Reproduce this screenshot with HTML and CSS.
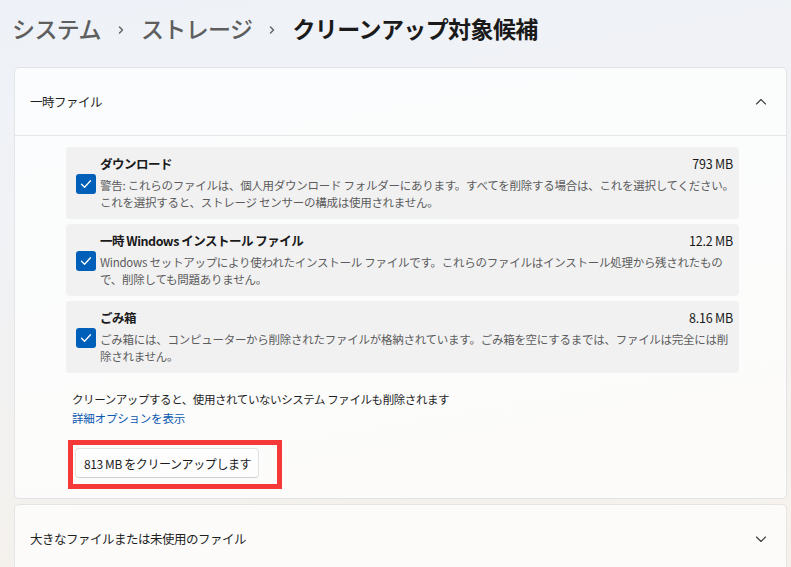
FILE: index.html
```html
<!DOCTYPE html>
<html lang="ja">
<head>
<meta charset="utf-8">
<title>クリーンアップ対象候補</title>
<link rel="stylesheet" href="styles.css">
</head>
<body>
<div class="page">
  <h1 class="crumbs">
    <span class="crumb">システム</span>
    <svg class="sep" width="8" height="12" viewBox="0 0 8 12"><path d="M2.5 3 L5.5 6 L2.5 9" fill="none" stroke="#666" stroke-width="1.5" stroke-linecap="round" stroke-linejoin="round"/></svg>
    <span class="crumb">ストレージ</span>
    <svg class="sep" width="8" height="12" viewBox="0 0 8 12"><path d="M2.5 3 L5.5 6 L2.5 9" fill="none" stroke="#666" stroke-width="1.5" stroke-linecap="round" stroke-linejoin="round"/></svg>
    <span class="crumb current">クリーンアップ対象候補</span>
  </h1>

  <section class="card">
    <div class="card-head">
      <span>一時ファイル</span>
      <svg class="chev" width="12" height="8" viewBox="0 0 12 8"><path d="M1.5 6 L6 1.5 L10.5 6" fill="none" stroke="#3a3a3a" stroke-width="1.1" stroke-linecap="round" stroke-linejoin="round"/></svg>
    </div>
    <div class="card-body">
      <div class="items">
        <div class="item">
          <span class="check"><svg width="12" height="10" viewBox="0 0 12 10"><path d="M1.5 5.2 L4.6 8.2 L10.5 1.8" fill="none" stroke="#fff" stroke-width="1.3" stroke-linecap="round" stroke-linejoin="round"/></svg></span>
          <div class="item-text">
            <div class="item-title"><span>ダウンロード</span><span class="size">793 MB</span></div>
            <div class="item-desc">警告: これらのファイルは、個人用ダウンロード フォルダーにあります。すべてを削除する場合は、これを選択してください。<br>これを選択すると、ストレージ センサーの構成は使用されません。</div>
          </div>
        </div>
        <div class="item">
          <span class="check"><svg width="12" height="10" viewBox="0 0 12 10"><path d="M1.5 5.2 L4.6 8.2 L10.5 1.8" fill="none" stroke="#fff" stroke-width="1.3" stroke-linecap="round" stroke-linejoin="round"/></svg></span>
          <div class="item-text">
            <div class="item-title"><span>一時 Windows インストール ファイル</span><span class="size">12.2 MB</span></div>
            <div class="item-desc">Windows セットアップにより使われたインストール ファイルです。これらのファイルはインストール処理から残されたもの<br>で、削除しても問題ありません。</div>
          </div>
        </div>
        <div class="item">
          <span class="check"><svg width="12" height="10" viewBox="0 0 12 10"><path d="M1.5 5.2 L4.6 8.2 L10.5 1.8" fill="none" stroke="#fff" stroke-width="1.3" stroke-linecap="round" stroke-linejoin="round"/></svg></span>
          <div class="item-text">
            <div class="item-title"><span>ごみ箱</span><span class="size">8.16 MB</span></div>
            <div class="item-desc">ごみ箱には、コンピューターから削除されたファイルが格納されています。ごみ箱を空にするまでは、ファイルは完全には削<br>除されません。</div>
          </div>
        </div>
      </div>
      <p class="note">クリーンアップすると、使用されていないシステム ファイルも削除されます<br><a class="link" href="#">詳細オプションを表示</a></p>
      <div class="highlight">
        <button class="btn">813 MB をクリーンアップします</button>
      </div>
    </div>
  </section>

  <section class="card">
    <div class="card-head">
      <span>大きなファイルまたは未使用のファイル</span>
      <svg class="chev" width="12" height="8" viewBox="0 0 12 8"><path d="M1.5 2 L6 6.5 L10.5 2" fill="none" stroke="#3a3a3a" stroke-width="1.1" stroke-linecap="round" stroke-linejoin="round"/></svg>
    </div>
  </section>
</div>
</body>
</html>
```

FILE: styles.css
```css
html, body {
  margin: 0;
  height: 100%;
  overflow: hidden;
}
body {
  font-family: "Noto Sans CJK JP", "Noto Sans", sans-serif;
  color: #1b1b1b;
  background: linear-gradient(170deg, #eef2f8 0%, #f1f2f4 40%, #f6f1ea 100%);
}
.page {
  padding: 0 4px 0 14px;
}
.crumbs {
  margin: 0 0 0 -2px;
  height: 67px;
  display: flex;
  align-items: center;
  padding-bottom: 10px;
  box-sizing: border-box;
  font-size: 23px;
  font-weight: 500;
  letter-spacing: -0.6px;
  line-height: 1;
}
.crumb { color: #5e5e5e; }
.crumb.current { color: #1a1a1a; font-weight: 700; }
.sep { margin: 2px 16px 0 16px; }

.card {
  background: rgba(255, 255, 255, 0.72);
  border: 1px solid #e4e4e6;
  border-radius: 5px;
  margin-bottom: 5px;
  font-size: 12px;
}
.card-head {
  height: 67px;
  display: flex;
  align-items: center;
  justify-content: space-between;
  padding: 0 19px 0 15px;
  font-size: 12.5px;
  letter-spacing: -0.5px;
  color: #1f1f1f;
}
.card-body {
  border-top: 1px solid #e6e6e8;
  padding: 11px 47px 9px 51px;
}
.items {
  display: flex;
  flex-direction: column;
  gap: 5px;
}
.item {
  display: flex;
  align-items: center;
  background: #f1f1f2;
  border-radius: 4px;
  padding: 6px 6px 8px 10px;
}
.check {
  width: 20px;
  height: 20px;
  flex: none;
  border-radius: 3px;
  background: #005fb8;
  display: flex;
  align-items: center;
  justify-content: center;
  margin: 4px 4px 0 0;
}
.item-text { flex: 1; min-width: 0; }
.item-title {
  display: flex;
  justify-content: space-between;
  align-items: center;
  height: 20px;
  margin-bottom: 4px;
  font-size: 12.5px;
  font-weight: 700;
  letter-spacing: -0.5px;
  color: #1a1a1a;
}
.size {
  font-weight: 400;
  letter-spacing: -0.2px;
  font-size: 12.5px;
}
.item-desc {
  font-size: 11.5px;
  letter-spacing: -0.26px;
  line-height: 17px;
  color: #5c5c5c;
  white-space: nowrap;
}
.note {
  margin: 17px 0 0 6px;
  font-size: 11.5px;
  letter-spacing: -0.42px;
  line-height: 19px;
  color: #1f1f1f;
}
.link {
  color: #0b58b0;
  text-decoration: none;
  letter-spacing: -0.2px;
}
.highlight {
  display: inline-block;
  margin: 12px 0 0 2px;
  border: 5px solid #f53939;
  padding: 3px 18px 6px 2px;
}
.btn {
  display: block;
  height: 30px;
  width: 184px;
  background: #fdfdfd;
  border: 1px solid #e2e2e2;
  border-bottom-color: #cfcfcf;
  border-radius: 4px;
  font-family: inherit;
  font-size: 12px;
  letter-spacing: -0.4px;
  color: #1b1b1b;
  text-align: left;
  padding: 0 0 0 8px;
}
```
